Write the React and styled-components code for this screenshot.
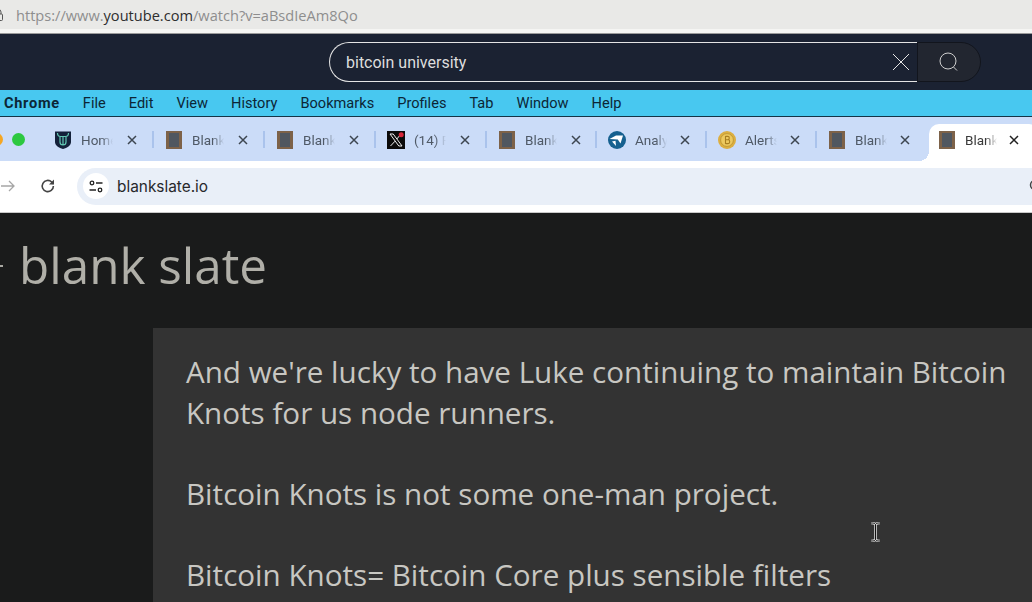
import React from 'react';
import styled, { createGlobalStyle } from 'styled-components';

const GlobalStyle = createGlobalStyle`
    html, body {
        margin: 0;
        padding: 0;
        background: #1a1b1b;
    }
    * {
        box-sizing: border-box;
    }
`;

const menuItems = ['File', 'Edit', 'View', 'History', 'Bookmarks', 'Profiles', 'Tab', 'Window', 'Help'];

const tabs = [
    { icon: 'shield', title: 'Home', closeGap: 14 },
    { icon: 'book', title: 'Blank', closeGap: 14 },
    { icon: 'book', title: 'Blank', closeGap: 14 },
    { icon: 'x', title: '(14) Feed', closeGap: 14 },
    { icon: 'book', title: 'Blank', closeGap: 14 },
    { icon: 'analytics', title: 'Analytics', closeGap: 13 },
    { icon: 'coin', title: 'Alerts', closeGap: 13 },
    { icon: 'book', title: 'Blank', closeGap: 13 },
    { icon: 'book', title: 'Blank', closeGap: 12, active: true },
];

const Favicon = ({ kind }) => {
    if (kind === 'shield') {
        return (
            <svg width="16" height="18" viewBox="0 0 16 18">
                <path d="M0 .5h16V11c0 3.500-4 6-8 7-4-1-8-3.500-8-7z" fill="#14213a" />
                <path d="M2.500 2c0 2.500 1 3.500 3 3.500h5c2 0 3-1 3-3.500M5 5.500V11c0 2 1.200 3 3 3s3-1 3-3V5.500M8 6v8" fill="none" stroke="#62c6b2" strokeWidth="1.200" />
            </svg>
        );
    }
    if (kind === 'book') {
        return (
            <svg width="16" height="18" viewBox="0 0 16 18">
                <rect width="16" height="18" fill="#7d6249" />
                <rect x="3" y="2" width="10" height="14" fill="#505760" />
            </svg>
        );
    }
    if (kind === 'x') {
        return (
            <svg width="18" height="18" viewBox="0 0 18 18">
                <rect width="18" height="18" fill="#0b0b0b" />
                <path d="M3 3h3.200l8.800 12h-3.200zM14 3L9.800 8M8 10.200L3.500 15" fill="none" stroke="#eee" strokeWidth="1" />
                <circle cx="14.200" cy="3.800" r="2.500" fill="#d8263a" />
            </svg>
        );
    }
    if (kind === 'analytics') {
        return (
            <svg width="18" height="18" viewBox="0 0 18 18">
                <circle cx="9" cy="9" r="9" fill="#15608f" />
                <path d="M1.500 8L8 4.500h7L12.500 12.500 9.800 8.500zM4 10.500l3.500-.8.500 5.300z" fill="#fff" />
            </svg>
        );
    }
    return (
        <svg width="18" height="18" viewBox="0 0 18 18">
            <circle cx="9" cy="9" r="9" fill="#dcae40" />
            <circle cx="9" cy="9" r="6.400" fill="#edc95f" stroke="#b8922e" strokeWidth="0.800" />
            <path d="M7.500 5v8M7.500 5.400h2.300c2 0 2 3.400 0 3.400H7.500M7.500 8.800h2.700c2 0 2 3.800 0 3.800H7.500" fill="none" stroke="#a87e20" strokeWidth="1.100" />
        </svg>
    );
};

const CloseGlyph = () => (
    <svg width="10" height="10" viewBox="0 0 10 10">
        <path d="M1 1l8 8M9 1L1 9" stroke="currentColor" strokeWidth="1.500" />
    </svg>
);

const App = () => {
    return (
        <Page>
            <GlobalStyle />
            <AddressStrip>
                <LockIcon width="9" height="12" viewBox="0 0 9 12">
                    <rect x="0.500" y="5" width="8" height="6.500" rx="1" fill="none" stroke="#555" />
                    <path d="M2 5V3a2.500 2.500 0 0 1 5 0v2" fill="none" stroke="#555" />
                </LockIcon>
                <SourceUrl>
                    https://www.<b>youtube.com</b>/watch?v=aBsdIeAm8Qo
                </SourceUrl>
            </AddressStrip>
            <StripEdge />
            <VideoHeader>
                <SearchForm>
                    <SearchField>
                        <SearchText>bitcoin university</SearchText>
                        <svg width="18" height="18" viewBox="0 0 18 18">
                            <path d="M1 1l16 16M17 1L1 17" stroke="#e6e6e6" strokeWidth="1" />
                        </svg>
                    </SearchField>
                    <SearchButton>
                        <svg width="20" height="20" viewBox="0 0 20 20">
                            <circle cx="10" cy="9" r="8" fill="none" stroke="#cfcfcf" strokeWidth="1" />
                            <path d="M15.500 15l3.500 3.500" stroke="#cfcfcf" strokeWidth="1" />
                        </svg>
                    </SearchButton>
                </SearchForm>
            </VideoHeader>
            <MenuBar>
                <AppName>Chrome</AppName>
                {menuItems.map((item) => (
                    <MenuItem key={item}>{item}</MenuItem>
                ))}
            </MenuBar>
            <TabStrip>
                <TrafficLight $color="#f5a623" />
                <TrafficLight $color="#2cc840" />
                <TabList>
                    {tabs.map((tab, index) => (
                        <Tab key={index} $active={tab.active}>
                            <TabIcon>
                                <Favicon kind={tab.icon} />
                            </TabIcon>
                            <TabTitle $active={tab.active}>{tab.title}</TabTitle>
                            <TabClose $active={tab.active} $gap={tab.closeGap}>
                                <CloseGlyph />
                            </TabClose>
                        </Tab>
                    ))}
                </TabList>
            </TabStrip>
            <Toolbar>
                <ForwardIcon width="16" height="14" viewBox="0 0 16 14">
                    <path d="M1 7h13M9 2l5 5-5 5" fill="none" stroke="#a6a6a6" strokeWidth="1.300" />
                </ForwardIcon>
                <ReloadIcon width="16" height="16" viewBox="0 0 16 16">
                    <path d="M13.400 8a5.600 5.600 0 1 1-1.700-4L13.500 6" fill="none" stroke="#444" strokeWidth="1.600" />
                    <path d="M14 1.500V6.500H9z" fill="#444" />
                </ReloadIcon>
                <Omnibox>
                    <SiteInfo>
                        <svg width="14" height="13" viewBox="0 0 14 13">
                            <circle cx="3" cy="3" r="1.800" fill="none" stroke="#222" strokeWidth="1.300" />
                            <path d="M7 3h6.500M.5 10H7" stroke="#222" strokeWidth="1.500" />
                            <circle cx="11" cy="10" r="1.800" fill="none" stroke="#222" strokeWidth="1.300" />
                        </svg>
                    </SiteInfo>
                    <OmniText>blankslate.io</OmniText>
                    <OmniAction width="12" height="14" viewBox="0 0 12 14">
                        <circle cx="6" cy="6" r="4.500" fill="none" stroke="#444" strokeWidth="1.500" />
                    </OmniAction>
                </Omnibox>
            </Toolbar>
            <Content>
                <SiteHeader>
                    <HeaderMark />
                    <SiteTitle>blank slate</SiteTitle>
                </SiteHeader>
                <Post>
                    <p>And we're lucky to have Luke continuing to maintain Bitcoin Knots for us node runners.</p>
                    <p>Bitcoin Knots is not some one-man project.</p>
                    <p>Bitcoin Knots= Bitcoin Core plus sensible filters</p>
                    <TextCursor width="11" height="20" viewBox="0 0 11 20">
                        <path d="M1 1c2 0 3.500 0 4.500 1.500C6.500 1 8 1 10 1M5.500 2.500v15M1 19c2 0 3.500 0 4.500-1.500C6.500 19 8 19 10 19" fill="none" stroke="#d8d8d8" strokeWidth="2.600" />
                        <path d="M1 1c2 0 3.500 0 4.500 1.500C6.500 1 8 1 10 1M5.500 2.500v15M1 19c2 0 3.500 0 4.500-1.500C6.500 19 8 19 10 19" fill="none" stroke="#111" strokeWidth="1" />
                    </TextCursor>
                </Post>
            </Content>
        </Page>
    );
};

export default App;

const Page = styled.div`
    width: 1032px;
    height: 602px;
    overflow: hidden;
    display: flex;
    flex-direction: column;
`;

const AddressStrip = styled.div`
    height: 29px;
    flex: none;
    display: flex;
    align-items: center;
    gap: 13px;
    background: #e9e9e7;
`;

const LockIcon = styled.svg`
    flex: none;
    margin-left: -6px;
`;

const SourceUrl = styled.div`
    font-family: "Open Sans", sans-serif;
    font-size: 14.600px;
    color: #8e8e8e;
    b {
        font-weight: 400;
        color: #2e2e2e;
    }
`;

const StripEdge = styled.div`
    height: 5px;
    flex: none;
    background: #f5f5f3;
    border-bottom: 1px solid #9a9a9a;
`;

const VideoHeader = styled.div`
    height: 56px;
    flex: none;
    display: flex;
    padding: 8px 0 0 329px;
    background: #1b2232;
`;

const SearchForm = styled.div`
    display: flex;
    height: 40px;
`;

const SearchField = styled.div`
    width: 588px;
    display: flex;
    align-items: center;
    justify-content: space-between;
    padding: 0 7px 0 16px;
    border: 1px solid #e4e4e4;
    border-right: none;
    border-radius: 20px 0 0 20px;
`;

const SearchText = styled.span`
    font-family: Roboto, sans-serif;
    font-size: 16px;
    color: #dedede;
`;

const SearchButton = styled.div`
    width: 64px;
    display: flex;
    align-items: center;
    justify-content: center;
    padding-right: 2px;
    background: #222630;
    border: 1px solid #12151d;
    border-radius: 0 20px 20px 0;
`;

const MenuBar = styled.div`
    height: 27px;
    flex: none;
    display: flex;
    align-items: center;
    gap: 23px;
    padding: 0 0 1px 4px;
    background: #48c8f0;
    border-bottom: 1px solid #143447;
    font-family: Roboto, sans-serif;
    font-size: 14.600px;
    color: #0c2636;
`;

const AppName = styled.span`
    font-weight: 700;
    letter-spacing: 0.700px;
`;

const MenuItem = styled.span`
    font-weight: 400;
`;

const TabStrip = styled.div`
    height: 44px;
    flex: none;
    display: flex;
    align-items: flex-start;
    gap: 9px;
    background: #cbdcf8;
`;

const TrafficLight = styled.span`
    flex: none;
    width: 13px;
    height: 13px;
    margin-top: 16px;
    border-radius: 50%;
    background: ${(props) => props.$color};
    &:first-child {
        margin-left: -10px;
    }
`;

const TabList = styled.div`
    display: flex;
    margin-left: 8.500px;
    padding-top: 7px;
`;

const Tab = styled.div`
    flex: none;
    position: relative;
    width: 110px;
    height: 37px;
    display: flex;
    align-items: center;
    padding: 0 0 6px 11.500px;
    &:nth-child(-n + 4) {
        width: 111px;
    }
    ${(props) =>
        props.$active &&
        `
        background: #fff;
        border-radius: 10px 10px 0 0;
        padding-left: 9px;
        margin-left: 2.500px;
        &::before {
            content: '';
            position: absolute;
            left: -10px;
            bottom: 0;
            width: 10px;
            height: 10px;
            background: radial-gradient(circle at 0 0, transparent 10px, #fff 10px);
        }
    `}
    &:not(:last-child):not(:nth-child(8))::after {
        content: '';
        position: absolute;
        right: 0;
        top: 7px;
        width: 1.500px;
        height: 17px;
        background: #aac3ec;
    }
`;

const TabIcon = styled.span`
    flex: none;
    width: 18px;
    height: 18px;
    display: flex;
    align-items: center;
    justify-content: center;
`;

const TabTitle = styled.span`
    flex: none;
    width: 32px;
    margin-left: 9px;
    overflow: hidden;
    white-space: nowrap;
    font-family: Roboto, sans-serif;
    font-size: 13.500px;
    color: ${(props) => (props.$active ? '#3a3a3a' : '#4f5966')};
    mask-image: linear-gradient(to right, #000 65%, transparent 100%);
`;

const TabClose = styled.span`
    flex: none;
    display: flex;
    margin-left: ${(props) => props.$gap}px;
    color: ${(props) => (props.$active ? '#222' : '#3d4650')};
`;

const Toolbar = styled.div`
    height: 52px;
    flex: none;
    display: flex;
    align-items: center;
    padding-bottom: 1px;
    background: #fff;
    border-bottom: 1px solid #c9c9c9;
`;

const ForwardIcon = styled.svg`
    flex: none;
`;

const ReloadIcon = styled.svg`
    flex: none;
    margin-left: 24px;
`;

const Omnibox = styled.div`
    flex: 1;
    height: 37px;
    display: flex;
    align-items: center;
    gap: 8px;
    margin-left: 21px;
    margin-right: -20px;
    padding-left: 6px;
    background: #e9eff8;
    border-radius: 19px;
`;

const SiteInfo = styled.span`
    width: 26px;
    height: 26px;
    display: flex;
    align-items: center;
    justify-content: center;
    background: #fff;
    border-radius: 50%;
`;

const OmniText = styled.span`
    font-family: Inter, sans-serif;
    font-size: 15.400px;
    color: #26282b;
`;

const OmniAction = styled.svg`
    flex: none;
    margin-left: auto;
    margin-right: 11px;
`;

const Content = styled.div`
    flex: 1;
    min-height: 0;
    display: flex;
    flex-direction: column;
    background: #1a1b1b;
`;

const SiteHeader = styled.div`
    height: 115px;
    flex: none;
    display: flex;
    align-items: flex-start;
    gap: 16px;
    padding-top: 20px;
`;

const HeaderMark = styled.span`
    flex: none;
    width: 3px;
    height: 2px;
    margin-top: 32px;
    background: #a9a8a2;
`;

const SiteTitle = styled.div`
    font-family: "Open Sans", sans-serif;
    font-size: 49.400px;
    line-height: 64px;
    color: #b0afa8;
`;

const Post = styled.div`
    flex: 1;
    position: relative;
    margin-left: 153px;
    padding: 24px 0 0 33px;
    background: #333333;
    font-family: "Open Sans", sans-serif;
    font-size: 29.600px;
    line-height: 40.500px;
    color: #c8c7c2;
    p {
        margin: 0 0 40.500px;
        width: 835px;
    }
`;

const TextCursor = styled.svg`
    position: absolute;
    left: 717px;
    top: 194px;
`;
